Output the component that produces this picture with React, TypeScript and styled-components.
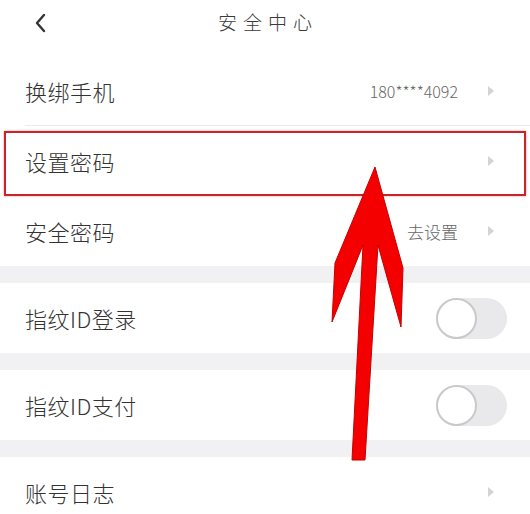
import React from "react";
import styled, { createGlobalStyle } from "styled-components";

const GlobalStyle = createGlobalStyle`
  html, body {
    margin: 0;
    padding: 0;
    background: #fff;
  }
  body {
    font-family: "Noto Sans CJK SC", "Noto Sans", sans-serif;
    color: #333;
  }
`;

const Page = styled.div`
  position: relative;
  width: 530px;
  height: 514px;
  overflow: hidden;
  background: #fff;
`;

const Header = styled.div`
  height: 56px;
  display: flex;
  align-items: flex-start;
  justify-content: center;
  position: relative;
`;

const Back = styled.div`
  position: absolute;
  left: 34px;
  top: 13px;
  width: 14px;
  height: 20px;
`;

const Title = styled.div`
  margin-top: 8px;
  font-size: 19px;
  font-weight: 300;
  letter-spacing: 6px;
  color: #3a3a3a;
  padding-left: 6px;
`;

const Row = styled.div<{ $h: number; $marked?: boolean }>`
  position: relative;
  height: ${(p) => p.$h}px;
  display: flex;
  align-items: center;
  justify-content: space-between;
  padding: 0 23px 0 25px;
  box-sizing: border-box;
  ${(p) =>
    p.$marked &&
    `
    &::after {
      content: "";
      position: absolute;
      left: 4px;
      right: 4px;
      top: 5px;
      bottom: 0;
      border: 2px solid #c9242b;
      box-shadow: 0 0 2px rgba(220, 40, 40, 0.5);
    }
  `}
`;

const Label = styled.span`
  font-size: 22px;
  font-weight: 300;
  color: #333;
  letter-spacing: 0.5px;
`;

const Right = styled.div`
  display: flex;
  align-items: center;
  gap: 30px;
  margin-right: 13px;
`;

const Value = styled.span<{ $size?: number }>`
  font-size: ${(p) => p.$size ?? 16}px;
  font-weight: 300;
  color: #666;
`;

const Divider = styled.div`
  height: 1px;
  margin-left: 25px;
  background: #ececec;
`;

const Band = styled.div`
  height: 17px;
  background: #f1f1f4;
`;

const Track = styled.div`
  width: 71px;
  height: 41px;
  border-radius: 21px;
  background: #e9e9eb;
  position: relative;
`;

const Knob = styled.div`
  width: 41px;
  height: 41px;
  border-radius: 50%;
  background: #fff;
  box-sizing: border-box;
  border: 2px solid #c9c9c9;
`;

const ArrowLayer = styled.svg`
  position: absolute;
  left: 0;
  top: 0;
  pointer-events: none;
`;

const Chevron = () => (
  <svg width="6" height="10" viewBox="0 0 6 10">
    <path d="M0 0 L6 5 L0 10 Z" fill="#d4d4d4" />
  </svg>
);

const Switch = () => (
  <Track>
    <Knob />
  </Track>
);

export default function App() {
  return (
    <Page>
      <GlobalStyle />
      <Header>
        <Back>
          <svg width="14" height="20" viewBox="0 0 14 20">
            <path d="M10 2 L3 10 L10 18" stroke="#333" strokeWidth="2.4" fill="none" strokeLinecap="round" strokeLinejoin="round" />
          </svg>
        </Back>
        <Title>安全中心</Title>
      </Header>
      <Row $h={69}>
        <Label>换绑手机</Label>
        <Right>
          <Value>180****4092</Value>
          <Chevron />
        </Right>
      </Row>
      <Divider />
      <Row $h={70} $marked>
        <Label>设置密码</Label>
        <Right>
          <Chevron />
        </Right>
      </Row>
      <Row $h={70}>
        <Label>安全密码</Label>
        <Right>
          <Value $size={17}>去设置</Value>
          <Chevron />
        </Right>
      </Row>
      <Band />
      <Row $h={70}>
        <Label>指纹ID登录</Label>
        <Switch />
      </Row>
      <Band />
      <Row $h={70}>
        <Label>指纹ID支付</Label>
        <Switch />
      </Row>
      <Band />
      <Row $h={70}>
        <Label>账号日志</Label>
        <Right>
          <Chevron />
        </Right>
      </Row>
      <ArrowLayer width="530" height="514" viewBox="0 0 530 514">
        <polygon
          points="375,167 403,268 401,327 378,245 365,460 352,460 363,245 332,322 335,263"
          fill="#f50000"
          stroke="#c40000"
          strokeWidth="1"
          strokeLinejoin="round"
        />
      </ArrowLayer>
    </Page>
  );
}
